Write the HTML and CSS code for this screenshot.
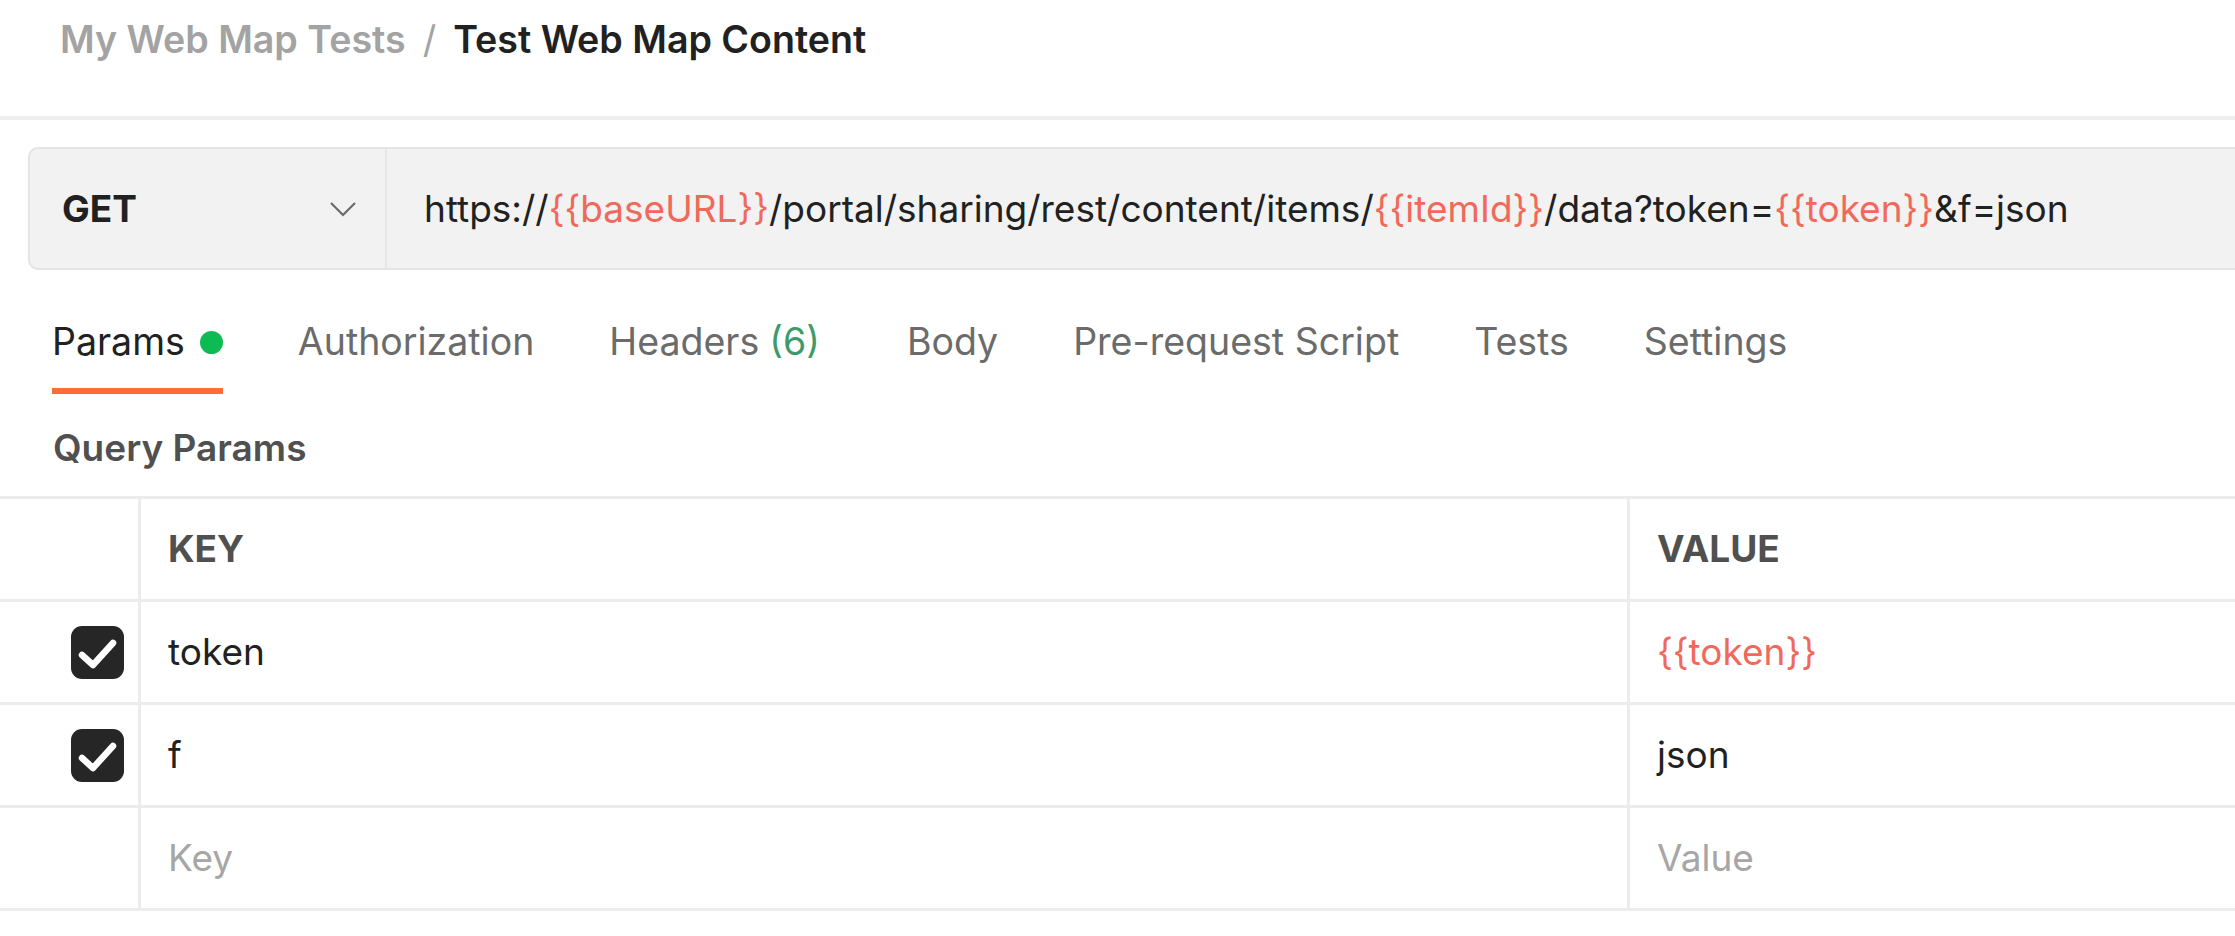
FILE: index.html
```html
<!DOCTYPE html>
<html lang="en">
<head>
    <meta charset="UTF-8">
    <meta name="viewport" content="width=device-width, initial-scale=1.0">
    <title>Test Web Map Content</title>
    <link rel="stylesheet" href="styles.css">
</head>
<body>
    <div class="header">
        <span class="crumb">My Web Map Tests</span>
        <span class="crumb-sep">/</span>
        <span class="crumb current">Test Web Map Content</span>
    </div>

    <div class="url-bar">
        <div class="method">
            <span>GET</span>
            <svg class="chevron" width="28" height="16" viewBox="0 0 28 16">
                <polyline points="2,2 14,14 26,2" fill="none" stroke="#6b6b6b" stroke-width="2.2"/>
            </svg>
        </div>
        <div class="url">https://<span class="var">{{baseURL}}</span>/portal/sharing/rest/content/items/<span class="var">{{itemId}}</span>/data?token=<span class="var">{{token}}</span>&amp;f=json</div>
    </div>

    <div class="tabs">
        <div class="tab active">Params <span class="dot"></span></div>
        <div class="tab">Authorization</div>
        <div class="tab headers">Headers <span class="count">(6)</span></div>
        <div class="tab">Body</div>
        <div class="tab">Pre-request Script</div>
        <div class="tab">Tests</div>
        <div class="tab">Settings</div>
    </div>

    <div class="section-title">Query Params</div>

    <div class="params">
        <div class="row head">
            <div class="cell check"></div>
            <div class="cell key">KEY</div>
            <div class="cell value">VALUE</div>
        </div>
        <div class="row">
            <div class="cell check">
                <span class="box">
                    <svg width="53" height="53" viewBox="0 0 53 53">
                        <polyline points="11,29 22,39 42,17" fill="none" stroke="#fff" stroke-width="6.5" stroke-linecap="round" stroke-linejoin="round"/>
                    </svg>
                </span>
            </div>
            <div class="cell key">token</div>
            <div class="cell value var">{{token}}</div>
        </div>
        <div class="row">
            <div class="cell check">
                <span class="box">
                    <svg width="53" height="53" viewBox="0 0 53 53">
                        <polyline points="11,29 22,39 42,17" fill="none" stroke="#fff" stroke-width="6.5" stroke-linecap="round" stroke-linejoin="round"/>
                    </svg>
                </span>
            </div>
            <div class="cell key">f</div>
            <div class="cell value">json</div>
        </div>
        <div class="row">
            <div class="cell check"></div>
            <div class="cell key placeholder">Key</div>
            <div class="cell value placeholder">Value</div>
        </div>
    </div>
</body>
</html>
```

FILE: styles.css
```css
* {
    margin: 0;
    padding: 0;
    box-sizing: border-box;
}

body {
    font-family: 'Inter', 'Segoe UI', 'Noto Sans', sans-serif;
    font-size: 37px;
    line-height: 52px;
    color: #212121;
    background: white;
    overflow: hidden;
}

/* breadcrumb */
.header {
    height: 120px;
    padding: 14px 0 0 60px;
    border-bottom: 4px solid #efefef;
    display: flex;
    align-items: flex-start;
    font-size: 37.6px;
}

.crumb {
    font-weight: 600;
    color: #a3a3a3;
}

.crumb.current {
    color: #212121;
}

.crumb-sep {
    color: #a3a3a3;
    margin: 0 17px;
}

/* request line */
.url-bar {
    display: flex;
    height: 123px;
    margin: 27px 0 0 28px;
    background: #f2f2f2;
    border: 2px solid #e4e4e4;
    border-right: none;
    border-radius: 10px 0 0 10px;
}

.method {
    width: 357px;
    flex-shrink: 0;
    display: flex;
    align-items: center;
    justify-content: space-between;
    padding: 0 28px 0 32px;
    border-right: 2px solid #e6e6e6;
    font-weight: 700;
}

.url {
    display: flex;
    align-items: center;
    padding-left: 37px;
    white-space: nowrap;
}

.var {
    color: #f0695a;
}

/* tabs */
.tabs {
    display: flex;
    gap: 75px;
    margin: 46px 0 0 52px;
    font-size: 37.5px;
}

.tab {
    color: #6b6b6b;
    padding-bottom: 20px;
    border-bottom: 6px solid transparent;
    display: flex;
    align-items: center;
    white-space: nowrap;
}

.tab.active {
    color: #212121;
    border-bottom-color: #ff6c37;
}

.dot {
    display: inline-block;
    width: 23px;
    height: 23px;
    border-radius: 50%;
    background: #0cbb52;
    margin-left: 15px;
}

.count {
    color: #3d9b6b;
    margin-left: 10px;
}

.tab.headers {
    margin-right: 12px;
}

.section-title {
    font-weight: 600;
    color: #505050;
    margin: 28px 0 0 53px;
}

/* params table */
.params {
    margin-top: 22px;
    border-bottom: 3px solid #ececec;
}

.row {
    display: flex;
    height: 103px;
    border-top: 3px solid #ececec;
}

.cell {
    display: flex;
    align-items: center;
}

.cell.check {
    width: 141px;
    flex-shrink: 0;
    justify-content: flex-end;
    padding-right: 14px;
    border-right: 3px solid #ececec;
}

.cell.key {
    width: 1489px;
    flex-shrink: 0;
    padding-left: 27px;
    border-right: 3px solid #ececec;
}

.cell.value {
    flex: 1;
    padding-left: 27px;
}

.row.head .cell {
    font-weight: 700;
    color: #505050;
}

.box {
    width: 53px;
    height: 53px;
    border-radius: 11px;
    background: #262626;
    display: block;
}

.box svg {
    display: block;
}

.placeholder {
    color: #a6a6a6;
}
```
